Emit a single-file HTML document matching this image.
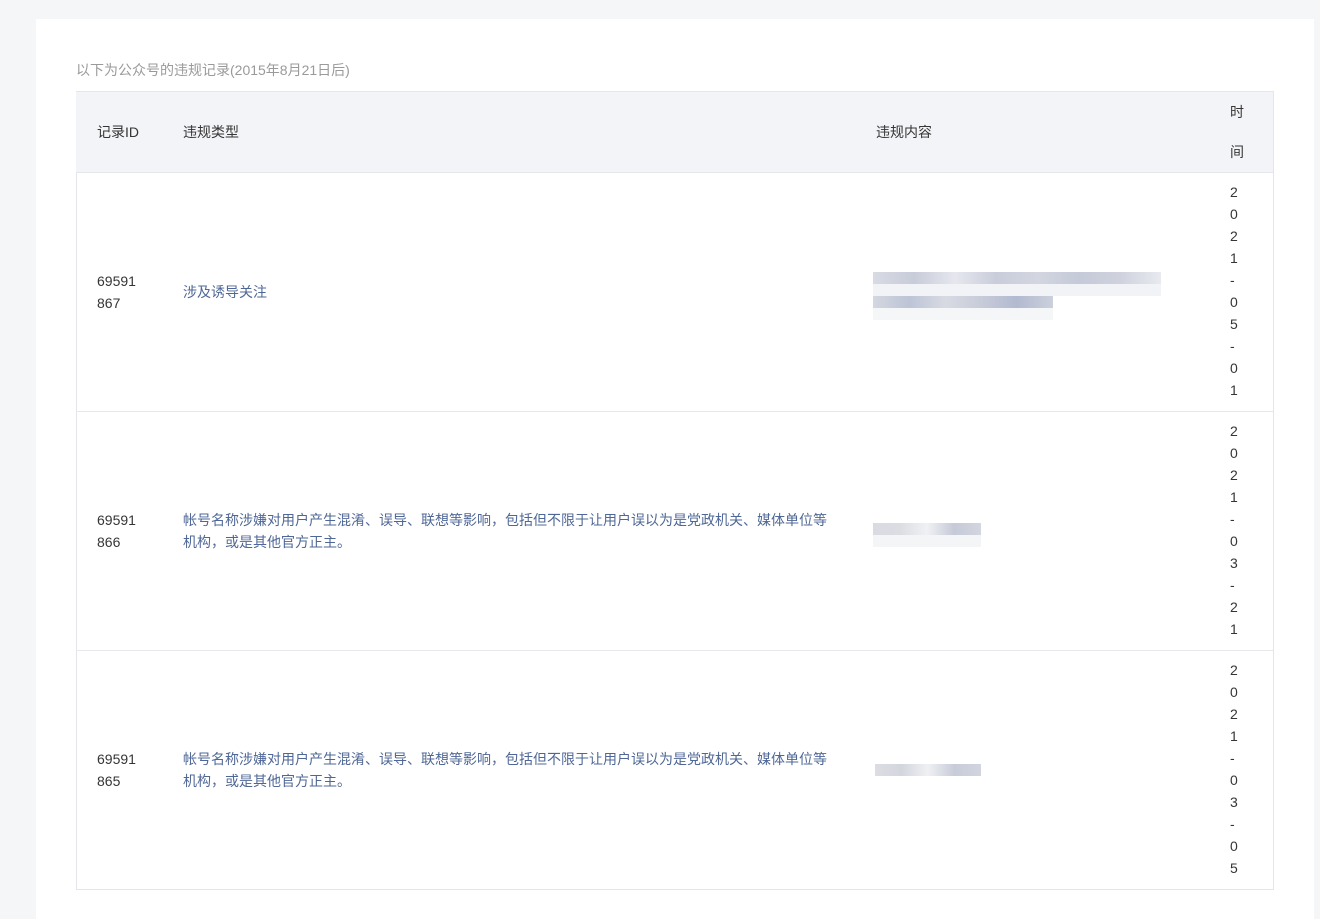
<!DOCTYPE html>
<html><head><meta charset="utf-8"><style>
body{margin:0;background:#f5f6f8;font-family:"Liberation Sans","Noto Sans CJK SC",sans-serif;font-size:14px;color:#353535;width:1320px;height:911px;overflow:hidden;position:relative}
.card{position:absolute;left:36px;top:19px;width:1278px;height:900px;background:#fff}
.a{position:absolute;line-height:22px;white-space:nowrap}
.tbl{position:absolute;left:76px;top:91px;width:1196px;height:797px;border:1px solid #e4e6eb}
.hd{position:absolute;left:76px;top:92px;width:1197px;height:80px;background:#f3f4f7;border-bottom:1px solid #e4e6eb}
.ln{position:absolute;left:77px;width:1196px;height:1px;background:#e7e8ec}
.blue{color:#4f6796}
.t{position:absolute;left:1230px;width:10px;line-height:22px;white-space:normal;word-break:break-all;color:#353535}
.blur{position:absolute;height:12px}
</style></head><body>
<div class="card"></div>
<div class="a" style="left:76px;top:59px;color:#9a9a9a">以下为公众号的违规记录(2015年8月21日后)</div>
<div class="tbl"></div>
<div class="hd"></div>
<div class="a" style="left:97px;top:121px">记录ID</div>
<div class="a" style="left:183px;top:121px">违规类型</div>
<div class="a" style="left:876px;top:121px">违规内容</div>
<div class="a" style="left:1230px;top:101px">时</div>
<div class="a" style="left:1230px;top:141px">间</div>
<div class="ln" style="top:411px"></div>
<div class="ln" style="top:650px"></div>

<div class="a" style="left:97px;top:270px">69591<br>867</div>
<div class="a blue" style="left:183px;top:281px">涉及诱导关注</div>
<div class="t" style="top:181px">2<br>0<br>2<br>1<br>-<br>0<br>5<br>-<br>0<br>1</div>
<div class="blur" style="left:873px;top:272px;width:288px;background:linear-gradient(90deg,#d8dbe4,#c8ccd9,#e6e7ee,#c9cddb,#d3d6e0,#c5cad9,#cfd2dd,#e8eaf0)"></div>
<div class="blur" style="left:873px;top:284px;width:288px;background:#f2f3f6"></div>
<div class="blur" style="left:873px;top:296px;width:180px;background:linear-gradient(90deg,#d4d7e0,#bcc4d6,#d8dae3,#c8ccd9,#b2bad0,#ccd0dc)"></div>
<div class="blur" style="left:873px;top:308px;width:180px;background:#f5f6f8"></div>

<div class="a" style="left:97px;top:509px">69591<br>866</div>
<div class="a blue" style="left:183px;top:509px">帐号名称涉嫌对用户产生混淆、误导、联想等影响，包括但不限于让用户误以为是党政机关、媒体单位等<br>机构，或是其他官方正主。</div>
<div class="t" style="top:420px">2<br>0<br>2<br>1<br>-<br>0<br>3<br>-<br>2<br>1</div>
<div class="blur" style="left:873px;top:523px;width:108px;background:linear-gradient(90deg,#d9dbe2,#dcdde3,#f0f1f4,#c6cad8,#d3d6df)"></div>
<div class="blur" style="left:873px;top:535px;width:108px;background:#f4f5f7"></div>

<div class="a" style="left:97px;top:748px">69591<br>865</div>
<div class="a blue" style="left:183px;top:748px">帐号名称涉嫌对用户产生混淆、误导、联想等影响，包括但不限于让用户误以为是党政机关、媒体单位等<br>机构，或是其他官方正主。</div>
<div class="t" style="top:659px">2<br>0<br>2<br>1<br>-<br>0<br>3<br>-<br>0<br>5</div>
<div class="blur" style="left:875px;top:764px;width:106px;background:linear-gradient(90deg,#dcdde2,#d4d6de,#eff0f3,#c8ccda,#d2d5df)"></div>
</body></html>
